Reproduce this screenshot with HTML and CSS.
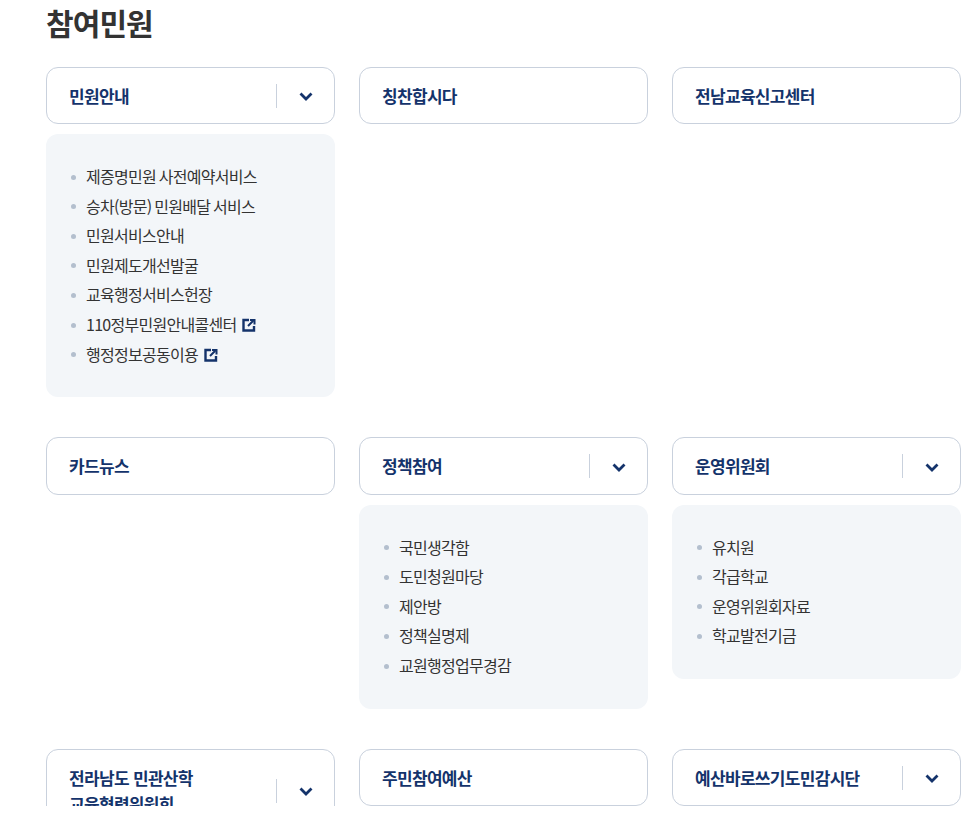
FILE: index.html
```html
<!DOCTYPE html>
<html lang="ko">
<head>
    <meta charset="UTF-8">
    <meta name="viewport" content="width=device-width, initial-scale=1.0">
    <title>참여민원</title>
    <link rel="stylesheet" href="styles.css">
</head>
<body>
    <div class="page">
        <h2 class="page-title">참여민원</h2>

        <div class="menu-grid">
            <div class="menu-item">
                <div class="menu-head">
                    <span class="menu-name">민원안내</span>
                    <span class="menu-toggle">
                        <svg class="chevron" viewBox="0 0 14 9"><path d="M1.5 1.5 7 7l5.5-5.5"/></svg>
                    </span>
                </div>
                <ul class="sub-list">
                    <li>제증명민원 사전예약서비스</li>
                    <li>승차(방문) 민원배달 서비스</li>
                    <li>민원서비스안내</li>
                    <li>민원제도개선발굴</li>
                    <li>교육행정서비스헌장</li>
                    <li>110정부민원안내콜센터
                        <svg class="ext" viewBox="0 0 14 14"><path class="ext-box" d="M7 2H1.5v10.5H12V8"/><path class="ext-arrow" d="M6 8 11 3M8 2h4.5v4.5"/></svg>
                    </li>
                    <li>행정정보공동이용
                        <svg class="ext" viewBox="0 0 14 14"><path class="ext-box" d="M7 2H1.5v10.5H12V8"/><path class="ext-arrow" d="M6 8 11 3M8 2h4.5v4.5"/></svg>
                    </li>
                </ul>
            </div>

            <div class="menu-item">
                <div class="menu-head">
                    <span class="menu-name">칭찬합시다</span>
                </div>
            </div>

            <div class="menu-item">
                <div class="menu-head">
                    <span class="menu-name">전남교육신고센터</span>
                </div>
            </div>

            <div class="menu-item">
                <div class="menu-head">
                    <span class="menu-name">카드뉴스</span>
                </div>
            </div>

            <div class="menu-item">
                <div class="menu-head">
                    <span class="menu-name">정책참여</span>
                    <span class="menu-toggle">
                        <svg class="chevron" viewBox="0 0 14 9"><path d="M1.5 1.5 7 7l5.5-5.5"/></svg>
                    </span>
                </div>
                <ul class="sub-list">
                    <li>국민생각함</li>
                    <li>도민청원마당</li>
                    <li>제안방</li>
                    <li>정책실명제</li>
                    <li>교원행정업무경감</li>
                </ul>
            </div>

            <div class="menu-item">
                <div class="menu-head">
                    <span class="menu-name">운영위원회</span>
                    <span class="menu-toggle">
                        <svg class="chevron" viewBox="0 0 14 9"><path d="M1.5 1.5 7 7l5.5-5.5"/></svg>
                    </span>
                </div>
                <ul class="sub-list">
                    <li>유치원</li>
                    <li>각급학교</li>
                    <li>운영위원회자료</li>
                    <li>학교발전기금</li>
                </ul>
            </div>

            <div class="menu-item">
                <div class="menu-head">
                    <span class="menu-name">전라남도 민관산학 교육협력위원회</span>
                    <span class="menu-toggle">
                        <svg class="chevron" viewBox="0 0 14 9"><path d="M1.5 1.5 7 7l5.5-5.5"/></svg>
                    </span>
                </div>
            </div>

            <div class="menu-item">
                <div class="menu-head">
                    <span class="menu-name">주민참여예산</span>
                </div>
            </div>

            <div class="menu-item">
                <div class="menu-head">
                    <span class="menu-name">예산바로쓰기도민감시단</span>
                    <span class="menu-toggle">
                        <svg class="chevron" viewBox="0 0 14 9"><path d="M1.5 1.5 7 7l5.5-5.5"/></svg>
                    </span>
                </div>
            </div>
        </div>
    </div>
</body>
</html>
```

FILE: styles.css
```css
body {
    margin: 0;
    background-color: white;
    font-family: "Noto Sans CJK KR", "Noto Sans", sans-serif;
    color: #333;
}
.page {
    height: 806px;
    overflow: hidden;
    padding: 0 11px 0 46px;
    box-sizing: border-box;
}
.page-title {
    margin: 0;
    height: 66.7px;
    font-size: 30px;
    line-height: 45px;
    font-weight: 700;
    letter-spacing: -0.03em;
    color: #333;
}
.menu-grid {
    display: grid;
    grid-template-columns: repeat(3, 289px);
    column-gap: 24px;
    row-gap: 40px;
    align-items: start;
}
.menu-head {
    display: flex;
    align-items: center;
    padding: 15px 0 14.4px 22px;
    border: 1px solid #c9d1dd;
    border-radius: 12px;
    background-color: white;
}
.menu-name {
    flex: 1;
    padding-right: 12px;
    font-size: 17px;
    line-height: 26px;
    font-weight: 700;
    letter-spacing: -0.04em;
    word-break: keep-all;
    color: #14336b;
}
.menu-toggle {
    flex: none;
    display: flex;
    align-items: center;
    justify-content: center;
    width: 58px;
    height: 24px;
    box-sizing: border-box;
    border-left: 1px solid #c9d1dd;
}
.chevron {
    width: 14px;
    height: 9px;
    margin-top: 2px;
    fill: none;
    stroke: #14336b;
    stroke-width: 2.8;
}
.sub-list {
    list-style: none;
    margin: 10px 0 0;
    padding: 28px 24px;
    background-color: #f3f6f9;
    border-radius: 12px;
}
.sub-list li {
    position: relative;
    padding-left: 16px;
    font-size: 16px;
    line-height: 29.6px;
    letter-spacing: -0.045em;
    word-spacing: -1px;
    color: #333;
}
.sub-list li::before {
    content: "";
    position: absolute;
    left: 1px;
    top: 12.5px;
    width: 5px;
    height: 5px;
    border-radius: 50%;
    background-color: #b3bfce;
}
.ext {
    width: 14px;
    height: 14px;
    margin-left: 3px;
    vertical-align: -1px;
    fill: none;
    stroke: #14336b;
}
.ext-box {
    stroke-width: 2.4;
}
.ext-arrow {
    stroke-width: 2;
}
```
